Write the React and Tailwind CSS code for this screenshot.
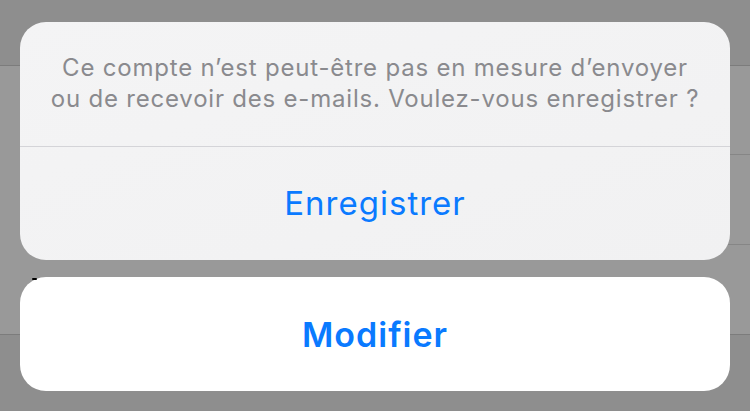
import React from "react";

const ListBackdrop = () => (
  <div className="flex h-full w-full flex-col bg-[#8e8e8e]">
    <div className="h-[66px] border-b border-[#7c7c7c]" />
    <div className="flex flex-col bg-[#999999]">
      <div className="h-[89px] border-b border-[#868686] ml-[40px]" />
      <div className="h-[90px] border-b border-[#868686] ml-[40px]" />
      <div className="h-[90px] border-b border-[#7c7c7c]" />
    </div>
  </div>
);

const App = () => {
  return (
    <div className="relative h-[411px] w-[750px] overflow-hidden font-['Inter','Noto_Sans',sans-serif]">
      <ListBackdrop />
      <div className="absolute inset-0 flex flex-col px-[20px] pt-[22px]">
        <div className="flex flex-col overflow-hidden rounded-[26px] bg-gradient-to-br from-[#f4f4f5] to-[#f1f1f2]">
          <div className="flex h-[125px] items-start justify-center border-b border-[#d4d4d8] pt-[30px]">
            <p className="text-center text-[24px] leading-[31px] tracking-[0.033em] text-[#8a8a8e]">
              Ce compte n’est peut-être pas en mesure d’envoyer
              <br />
              ou de recevoir des e-mails. Voulez-vous enregistrer ?
            </p>
          </div>
          <button className="flex h-[113px] items-center justify-center text-[33px] tracking-[1px] text-[#0a7aff]">
            Enregistrer
          </button>
        </div>
        <button className="relative mt-[17px] flex h-[114px] items-center justify-center rounded-[26px] bg-white text-[34px] font-semibold tracking-[1px] text-[#0a7aff]">
          <span className="absolute left-[12px] top-[1px] h-[2px] w-[5px] rounded-full bg-black" />
          Modifier
        </button>
      </div>
    </div>
  );
};

export default App;
